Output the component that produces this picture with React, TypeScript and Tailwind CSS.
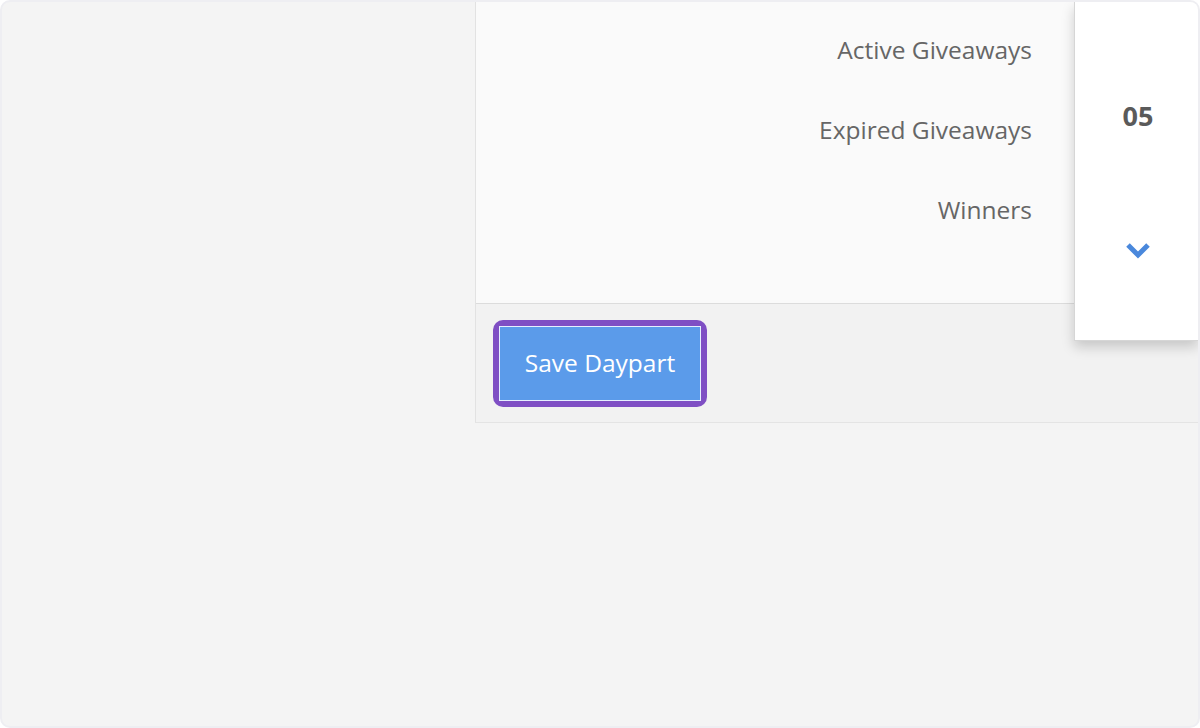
import React from 'react';

const rows = ['Active Giveaways', 'Expired Giveaways', 'Winners'];

const App: React.FC = () => {
  return (
    <div className="w-[1200px] h-[728px] bg-white" style={{ fontFamily: '"Open Sans", "Noto Sans", sans-serif' }}>
      <div className="relative flex w-full h-full bg-[#f4f4f4] border-2 border-[#eeeef2] rounded-[10px] overflow-hidden">
        <div className="w-[473px] shrink-0" />
        <div className="flex-1 self-start flex flex-col border-l border-[#e2e2e2] border-b border-b-[#e4e4e4]">
          <div className="h-[302px] bg-[#fafafa] border-b border-[#dcdcdc] pt-[8px] pr-[166px]">
            {rows.map(label => (
              <div key={label} className="h-[80px] flex items-center justify-end text-[24.5px] text-[#666666]">
                {label}
              </div>
            ))}
          </div>
          <div className="h-[118px] bg-[#f2f2f2] pl-[17px] pt-[16px]">
            <button className="w-[214px] h-[87px] rounded-[10px] bg-[#7f4fc4] p-[6px]">
              <div className="w-full h-full bg-[#5b9bea] border border-[#e6efff] flex items-center justify-center text-white text-[24.5px]">
                Save Daypart
              </div>
            </button>
          </div>
        </div>
        <div className="absolute top-0 right-0 w-[124px] h-[339px] bg-white border-l border-b border-[#d6d6d6] shadow-[0_6px_12px_rgba(0,0,0,0.18)] flex flex-col items-center pl-[3px]">
          <div className="mt-[100px] text-[27px] font-bold text-[#5a5a5a] leading-none">05</div>
          <svg className="mt-[113px]" width="26" height="18" viewBox="0 0 26 18">
            <path d="M3 3 L13 13 L23 3" fill="none" stroke="#4a88dc" strokeWidth="5" strokeLinecap="butt" />
          </svg>
        </div>
      </div>
    </div>
  );
};

export default App;
